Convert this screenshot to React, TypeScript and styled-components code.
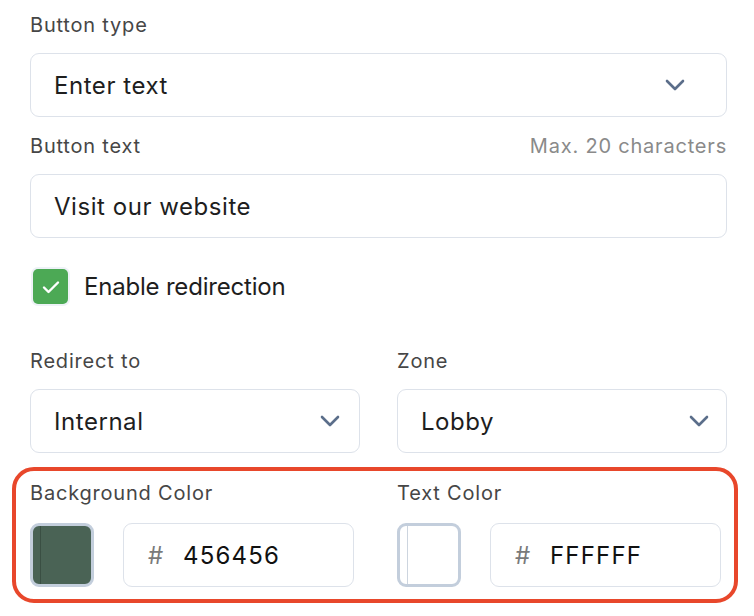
import React from "react";
import styled, { createGlobalStyle } from "styled-components";

const Global = createGlobalStyle`
  html, body { margin: 0; padding: 0; background: #ffffff; }
  body { font-family: Inter, "Noto Sans", sans-serif; -webkit-font-smoothing: antialiased; }
  * { box-sizing: border-box; }
`;

const Page = styled.div`
  width: 754px;
  padding: 13px 27px 0 30px;
  display: flex;
  flex-direction: column;
`;

const Field = styled.div<{ $mt?: number; $gap?: number }>`
  display: flex;
  flex-direction: column;
  gap: ${(p) => p.$gap ?? 16}px;
  margin-top: ${(p) => p.$mt ?? 0}px;
`;

const LabelRow = styled.div`
  display: flex;
  justify-content: space-between;
  align-items: baseline;
`;

const Label = styled.span`
  font-size: 20px;
  line-height: 24px;
  letter-spacing: 0.8px;
  color: #464646;
`;

const Hint = styled.span`
  font-size: 20px;
  line-height: 24px;
  letter-spacing: 0.8px;
  color: #8a8a8a;
`;

const Box = styled.div<{ $pr?: number }>`
  height: 64px;
  border: 1px solid #dde2ea;
  border-radius: 9px;
  background: #fff;
  display: flex;
  align-items: center;
  padding: 0 ${(p) => p.$pr ?? 23}px 0 23px;
  font-size: 24px;
  letter-spacing: 0.55px;
  color: #1e1e1e;
`;

const Value = styled.span`
  flex: 1;
`;

const Chevron = () => (
  <svg width="20" height="12" viewBox="0 0 20 12" fill="none">
    <polyline points="2,2 10,10 18,2" stroke="#5b6e8a" strokeWidth="2.6" strokeLinecap="round" strokeLinejoin="round" />
  </svg>
);

const CheckRow = styled.label`
  display: flex;
  align-items: center;
  gap: 14px;
  margin-top: 29px;
  margin-left: 1px;
  font-size: 24px;
  letter-spacing: -0.2px;
  color: #1e1e1e;
`;

const CheckBox = styled.span`
  width: 39px;
  height: 39px;
  border-radius: 7px;
  background: #eef2f7;
  padding: 2px;
  display: flex;
`;

const CheckInner = styled.span`
  flex: 1;
  border-radius: 5px;
  background: #4ca955;
  display: flex;
  align-items: center;
  justify-content: center;
`;

const Grid = styled.div<{ $mt?: number }>`
  display: grid;
  grid-template-columns: 1fr 1fr;
  column-gap: 37px;
  margin-top: ${(p) => p.$mt ?? 0}px;
`;

const Highlight = styled.div`
  margin: 14px -11px 0 -18px;
  border: 4px solid #e8472b;
  border-radius: 22px;
  padding: 10px 7px 12px 14px;
`;

const ColorRow = styled.div`
  display: flex;
  align-items: center;
  gap: 29px;
`;

const Swatch = styled.div<{ $color: string; $line: string }>`
  width: 64px;
  height: 64px;
  flex: none;
  border: 3px solid #c3cedc;
  border-radius: 9px;
  background: ${(p) => p.$color};
  position: relative;
  &::before {
    content: "";
    position: absolute;
    left: 7px;
    top: 0;
    bottom: 0;
    width: 1px;
    background: ${(p) => p.$line};
  }
`;

const HexBox = styled.div`
  width: 231px;
  height: 64px;
  border: 1px solid #dde2ea;
  border-radius: 9px;
  display: flex;
  align-items: center;
  padding-left: 24px;
  font-size: 24px;
`;

const Hash = styled.span`
  color: #7a7a7a;
  width: 35px;
`;

const Hex = styled.span`
  color: #111;
  letter-spacing: 1.2px;
`;

export default function App() {
  return (
    <>
      <Global />
      <Page>
        <Field>
          <Label>Button type</Label>
          <Box $pr={41}>
            <Value>Enter text</Value>
            <Chevron />
          </Box>
        </Field>
        <Field $mt={17}>
          <LabelRow>
            <Label>Button text</Label>
            <Hint>Max. 20 characters</Hint>
          </LabelRow>
          <Box>
            <Value>Visit our website</Value>
          </Box>
        </Field>
        <CheckRow>
          <CheckBox>
            <CheckInner>
              <svg width="18" height="14" viewBox="0 0 18 14" fill="none">
                <polyline points="2,7.5 6.5,12 16,2.5" stroke="#fff" strokeWidth="2.4" strokeLinecap="round" strokeLinejoin="round" />
              </svg>
            </CheckInner>
          </CheckBox>
          Enable redirection
        </CheckRow>
        <Grid $mt={43}>
          <Field>
            <Label>Redirect to</Label>
            <Box $pr={19}>
              <Value>Internal</Value>
              <Chevron />
            </Box>
          </Field>
          <Field>
            <Label>Zone</Label>
            <Box $pr={17}>
              <Value>Lobby</Value>
              <Chevron />
            </Box>
          </Field>
        </Grid>
        <Highlight>
          <Grid>
            <Field $gap={18}>
              <Label>Background Color</Label>
              <ColorRow>
                <Swatch $color="#4a6355" $line="#3a4f43" />
                <HexBox>
                  <Hash>#</Hash>
                  <Hex>456456</Hex>
                </HexBox>
              </ColorRow>
            </Field>
            <Field $gap={18}>
              <Label>Text Color</Label>
              <ColorRow>
                <Swatch $color="#ffffff" $line="#cdd5df" />
                <HexBox>
                  <Hash>#</Hash>
                  <Hex>FFFFFF</Hex>
                </HexBox>
              </ColorRow>
            </Field>
          </Grid>
        </Highlight>
      </Page>
    </>
  );
}
